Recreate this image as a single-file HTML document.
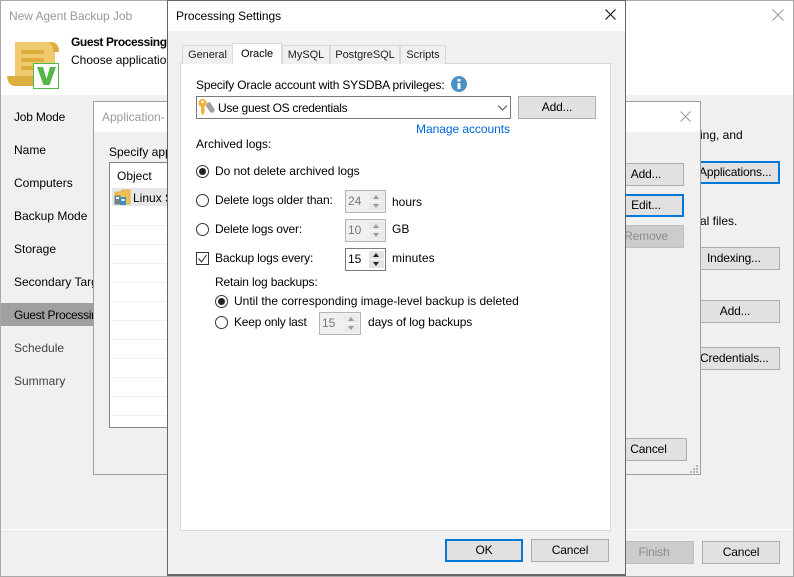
<!DOCTYPE html>
<html><head><meta charset="utf-8"><style>
html,body{margin:0;padding:0;width:794px;height:577px;overflow:hidden;background:#f0f0f0}
body{position:relative;font-family:"Liberation Sans",sans-serif;font-size:12px;color:#000}
div,span.a{position:absolute;box-sizing:border-box}
.t{white-space:nowrap;line-height:16px;height:16px}
.g{color:#444}
.b{background:#e1e1e1;border:1px solid #adadad;text-align:center;line-height:20px;white-space:nowrap;height:23px;letter-spacing:-.15px}
.f{border:2px solid #0078d7;line-height:19px}
.d{background:#cccccc;border:1px solid #bfbfbf;color:#8a8a8a}
.r{width:13px;height:13px;border:1px solid #333;border-radius:50%;background:#fff}
.r.on:after{content:"";position:absolute;left:2px;top:2px;width:7px;height:7px;border-radius:50%;background:#222}
.tab{background:#f0f0f0;border:1px solid #d9d9d9;border-bottom:0;height:18px;line-height:17px;text-align:center;white-space:nowrap;color:#222;font-size:11px;letter-spacing:-.05px}
.sp{height:23px;border:1px solid #7a7a7a;background:#fff;line-height:20px;padding-left:2px}
.sp.dis{border-color:#b5b5b5;background:#f0f0f0;color:#777}
.sb{position:absolute;right:1px;top:2px;width:15px;height:17px;background:linear-gradient(#e3e3e3 0,#e3e3e3 8px,#fff 8px,#fff 9px,#e3e3e3 9px)}
.sb:before,.sb:after{content:"";position:absolute;left:4px;width:0;height:0;border-left:3.500px solid transparent;border-right:3.500px solid transparent}
.sb:before{top:2px;border-bottom:4px solid #222}
.sb:after{top:11px;border-top:4px solid #222}
.dis .sb{background:linear-gradient(#eaeaea 0,#eaeaea 8px,#fff 8px,#fff 9px,#eaeaea 9px)}
.dis .sb:before{border-bottom-color:#999}
.dis .sb:after{border-top-color:#999}
.ln{left:112px;width:56px;height:1px;background:#eeeeee}
</style></head><body>

<!-- main wizard -->
<div style="left:0;top:0;width:794px;height:577px;background:#f0f0f0;border:1px solid #a8a8a8"></div>
<div style="left:1px;top:1px;width:792px;height:94px;background:#fff"></div>
<div class="t" style="left:9px;top:8px;color:#999;letter-spacing:-.05px">New Agent Backup Job</div>
<div class="t" style="left:71px;top:34px;font-weight:bold;letter-spacing:-.4px">Guest Processing</div>
<div class="t" style="left:71px;top:52px;">Choose application</div>

<svg style="position:absolute;left:6px;top:40px" width="56" height="50" viewBox="0 0 56 50">
<path d="M9 2H47Q53 3 53 12H49V42H9Z" fill="#f1c96f"/>
<path d="M42 2Q53 2 53 12H47Q47 4 42 2Z" fill="#dcae3e"/>
<path d="M1 36H30V46H9Q2 46 1 36Z" fill="#dcae3e"/>
<rect x="15" y="10" width="23" height="4" fill="#dcae3e"/>
<rect x="15" y="18" width="23" height="4" fill="#dcae3e"/>
<rect x="15" y="26" width="14" height="4" fill="#dcae3e"/>
<rect x="27.500" y="23.500" width="25" height="25" fill="#fff" stroke="#52b848" stroke-width="1"/>
<path d="M31 27H37L40.500 39L44 27H50L43.500 45H37.500Z" fill="#52b848"/>
</svg>
<svg style="position:absolute;left:772px;top:9px" width="12" height="12"><path d="M.5.5L11.500 11.500M11.500.5L.5 11.500" stroke="#999" stroke-width="1"/></svg>

<!-- nav -->
<div class="t" style="left:14px;top:109px;letter-spacing:-.2px">Job Mode</div>
<div class="t" style="left:14px;top:142px;">Name</div>
<div class="t" style="left:14px;top:175px;">Computers</div>
<div class="t" style="left:14px;top:208px;">Backup Mode</div>
<div class="t" style="left:14px;top:241px;">Storage</div>
<div class="t" style="left:14px;top:274px;">Secondary Targ</div>
<div style="left:1px;top:303px;width:93px;height:23px;background:#a0a0a0"></div>
<div class="t" style="left:14px;top:307px;width:80px;overflow:hidden;letter-spacing:-.3px">Guest Processin</div>
<div class="t g" style="left:14px;top:340px;">Schedule</div>
<div class="t g" style="left:14px;top:373px;">Summary</div>

<!-- wizard right buttons -->
<div class="t" style="left:700px;top:127px;">ing, and</div>
<div class="b f" style="left:690px;top:161px;width:90px;height:23px;text-align:left;padding-left:7px;">Applications...</div>
<div class="t" style="left:700px;top:213px;">al files.</div>
<div class="b" style="left:690px;top:247px;width:90px;text-align:left;padding-left:16px;">Indexing...</div>
<div class="b" style="left:690px;top:300px;width:90px;">Add...</div>
<div class="b" style="left:690px;top:347px;width:90px;text-align:left;padding-left:9px;">Credentials...</div>
<div style="left:1px;top:529px;width:792px;height:1px;background:#fff"></div>
<div class="b d" style="left:612px;top:541px;width:82px;padding-left:2px;">Finish</div>
<div class="b" style="left:702px;top:541px;width:78px;">Cancel</div>

<!-- Application dialog -->
<div style="left:93px;top:101px;width:608px;height:374px;background:#f0f0f0;border:1px solid #a0a0a0"></div>
<div style="left:94px;top:102px;width:606px;height:30px;background:#fff"></div>
<div class="t" style="left:102px;top:109px;color:#999;">Application-</div>
<svg style="position:absolute;left:680px;top:111px" width="11" height="11"><path d="M.5.5L10.500 10.500M10.500.5L.5 10.500" stroke="#999" stroke-width="1"/></svg>
<div class="t" style="left:109px;top:144px;">Specify app</div>
<div style="left:109px;top:162px;width:62px;height:266px;background:#fff;border:1px solid #82828a"></div>
<div class="t" style="left:117px;top:168px;">Object</div>
<div style="left:112px;top:188px;width:56px;height:18px;background:#e6e6e6"></div>
<svg style="position:absolute;left:114px;top:189px" width="18" height="17" viewBox="0 0 18 17">
<path d="M1 3H7L8 1H16V15H1Z" fill="#f0c050" stroke="#d9a53a" stroke-width=".7"/>
<rect x="0.500" y="6.500" width="6" height="9" fill="#6d7f8c"/><rect x="6" y="8" width="6" height="8" fill="#3b8ec2"/><rect x="2" y="8" width="3" height="2" fill="#fff"/><rect x="7.500" y="10" width="3" height="2" fill="#fff"/>
</svg>
<div class="t" style="left:133px;top:190px;width:35px;overflow:hidden;">Linux S</div>
<div class="ln" style="top:225px"></div><div class="ln" style="top:244px"></div><div class="ln" style="top:263px"></div><div class="ln" style="top:282px"></div><div class="ln" style="top:301px"></div><div class="ln" style="top:320px"></div><div class="ln" style="top:339px"></div><div class="ln" style="top:358px"></div><div class="ln" style="top:377px"></div><div class="ln" style="top:396px"></div><div class="ln" style="top:415px"></div>
<div class="b" style="left:610px;top:163px;width:74px;padding-left:0;left:608px;width:76px;">Add...</div>
<div class="b f" style="left:608px;top:194px;width:76px;">Edit...</div>
<div class="b d" style="left:608px;top:225px;width:76px;">Remove</div>
<div class="b" style="left:610px;top:438px;width:77px;">Cancel</div>
<svg style="position:absolute;left:690px;top:465px" width="9" height="9" fill="#b5b5b5"><rect x="6" y="0" width="2" height="2"/><rect x="3" y="3" width="2" height="2"/><rect x="6" y="3" width="2" height="2"/><rect x="0" y="6" width="2" height="2"/><rect x="3" y="6" width="2" height="2"/><rect x="6" y="6" width="2" height="2"/></svg>

<!-- Processing Settings dialog -->
<div style="left:167px;top:0;width:459px;height:576px;background:#f0f0f0;border:1px solid #666;border-bottom:2px solid #666"></div>
<div style="left:168px;top:1px;width:457px;height:30px;background:#fff"></div>
<div class="t" style="left:176px;top:8px;letter-spacing:-.05px">Processing Settings</div>
<svg style="position:absolute;left:605px;top:9px" width="11" height="11"><path d="M.5.5L10.500 10.500M10.500.5L.5 10.500" stroke="#111" stroke-width="1.100"/></svg>

<!-- tabs -->
<div style="left:180px;top:63px;width:431px;height:468px;background:#fff;border:1px solid #d9d9d9"></div>
<div class="tab" style="left:182px;top:45px;width:51px;height:19px;line-height:19px">General</div>
<div class="tab" style="left:232px;top:43px;width:50px;height:21px;background:#fff;line-height:20px;color:#000;">Oracle</div>
<div class="tab" style="left:282px;top:45px;width:48px;height:19px;line-height:19px">MySQL</div>
<div class="tab" style="left:330px;top:45px;width:70px;height:19px;line-height:19px">PostgreSQL</div>
<div class="tab" style="left:400px;top:45px;width:46px;height:19px;line-height:19px">Scripts</div>

<div class="t" style="left:196px;top:77px;letter-spacing:-.18px">Specify Oracle account with SYSDBA privileges:</div>
<svg style="position:absolute;left:451px;top:76px" width="16" height="16"><circle cx="8" cy="8" r="8" fill="#4a90c4"/><rect x="6.500" y="7" width="3" height="6" fill="#fff"/><rect x="6.500" y="3" width="3" height="2.500" fill="#fff"/></svg>
<div style="left:196px;top:96px;width:315px;height:23px;background:#fff;border:1px solid #7a7a7a"></div>
<svg style="position:absolute;left:198px;top:98px" width="18" height="18" viewBox="0 0 18 18">
<path d="M9 5L12 4L17 12L15 15L12 14L8 8Z" fill="#a0a0a0"/>
<circle cx="4.500" cy="5" r="4" fill="#eeb23a"/><circle cx="4.500" cy="4" r="1.300" fill="#fff"/>
<path d="M3 8H6.500V15L4.500 17L3 15Z" fill="#eeb23a"/>
</svg>
<div class="t" style="left:218px;top:100px;letter-spacing:-.28px">Use guest OS credentials</div>
<svg style="position:absolute;left:497px;top:105px" width="11" height="6"><path d="M1 .5L5.500 5L10 .5" stroke="#555" fill="none" stroke-width="1.100"/></svg>
<div class="b" style="left:518px;top:96px;width:78px;">Add...</div>
<div class="t" style="left:416px;top:121px;color:#0066dd;letter-spacing:-.05px">Manage accounts</div>
<div class="t" style="left:196px;top:136px;">Archived logs:</div>

<div class="r on" style="left:196px;top:165px;"></div>
<div class="t" style="left:215px;top:163px;letter-spacing:-.03px">Do not delete archived logs</div>
<div class="r" style="left:196px;top:194px;"></div>
<div class="t" style="left:215px;top:192px;letter-spacing:-.1px">Delete logs older than:</div>
<div class="sp dis" style="left:345px;top:190px;width:41px;">24<div class="sb"></div></div>
<div class="t" style="left:392px;top:194px;">hours</div>
<div class="r" style="left:196px;top:223px;"></div>
<div class="t" style="left:215px;top:221px;letter-spacing:-.18px">Delete logs over:</div>
<div class="sp dis" style="left:345px;top:219px;width:41px;">10<div class="sb"></div></div>
<div class="t" style="left:392px;top:221px;">GB</div>
<div style="left:196px;top:252px;width:13px;height:13px;border:1px solid #333;background:#fff"></div>
<svg style="position:absolute;left:197px;top:253px" width="11" height="11"><path d="M1.500 5.500L4.500 9L9.500 2" stroke="#222" fill="none" stroke-width="1"/></svg>
<div class="t" style="left:215px;top:250px;letter-spacing:-.18px">Backup logs every:</div>
<div class="sp" style="left:345px;top:248px;width:41px;">15<div class="sb"></div></div>
<div class="t" style="left:392px;top:250px;letter-spacing:.1px">minutes</div>
<div class="t" style="left:215px;top:274px;letter-spacing:-.15px">Retain log backups:</div>
<div class="r on" style="left:215px;top:295px;"></div>
<div class="t" style="left:234px;top:293px;">Until the corresponding image-level backup is deleted</div>
<div class="r" style="left:215px;top:316px;"></div>
<div class="t" style="left:234px;top:314px;letter-spacing:-.2px">Keep only last</div>
<div class="sp dis" style="left:319px;top:312px;width:42px;">15<div class="sb"></div></div>
<div class="t" style="left:368px;top:314px;letter-spacing:-.1px">days of log backups</div>

<div class="b f" style="left:445px;top:539px;width:78px;">OK</div>
<div class="b" style="left:531px;top:539px;width:78px;">Cancel</div>
</body></html>
